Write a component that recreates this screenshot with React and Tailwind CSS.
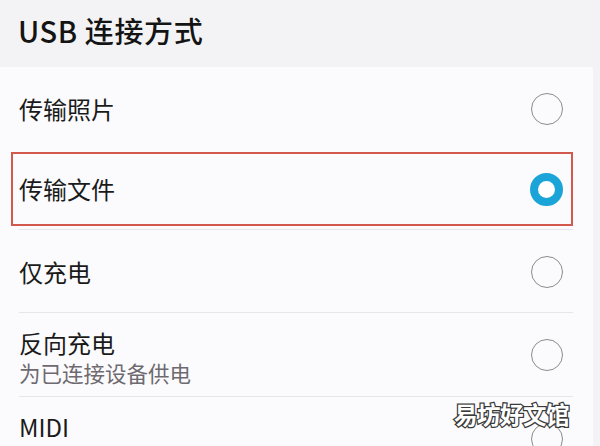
import React from "react";

const font = { fontFamily: '"Noto Sans CJK SC", "Noto Sans", sans-serif' };

function Radio({ checked }) {
  if (checked) {
    return (
      <div className="w-[33px] h-[33px] rounded-full border-[8px] border-[#1aa4d8] bg-white shrink-0" />
    );
  }
  return <div className="w-[32px] h-[32px] rounded-full border-[1.3px] border-[#8c8c8c] shrink-0" />;
}

function Divider() {
  return <div className="ml-[8px] h-px bg-[#e6e6ea] shrink-0" />;
}

export default function App() {
  return (
    <div
      className="relative w-[600px] h-[446px] overflow-hidden flex bg-[#fbfbfd] text-[#1a1a1a]"
      style={font}
    >
      <div className="flex-1 flex flex-col">
        <div className="shrink-0 h-[67px] bg-[#f3f3f5] flex items-center pl-[18px] pb-[6px]">
          <span className="text-[29px] leading-none font-medium tracking-[0.6px] text-[#141414]">USB 连接方式</span>
        </div>
        <div className="shrink-0 flex flex-col pl-[11px] pr-[20px]">
          <div className="h-[83px] flex items-center justify-between pl-[8px] pr-[10px] pt-[1px]">
            <span className="text-[24px] leading-none">传输照片</span>
            <Radio />
          </div>
          <div className="mt-[2px] h-[74px] border-[2px] border-[#d3594f] flex items-center justify-between pl-[6px] pr-[8.5px]">
            <span className="text-[24px] leading-none">传输文件</span>
            <Radio checked />
          </div>
          <div className="h-[3px]" />
          <Divider />
          <div className="h-[82px] flex items-center justify-between pl-[8px] pr-[10px] pt-[2px]">
            <span className="text-[24px] leading-none">仅充电</span>
            <Radio />
          </div>
          <Divider />
          <div className="h-[83px] flex items-center justify-between pl-[8px] pr-[10px]">
            <div className="flex flex-col pt-[6px]">
              <span className="text-[24px] leading-[30px]">反向充电</span>
              <span className="text-[21.5px] leading-[30px] text-[#6e6a70]">为已连接设备供电</span>
            </div>
            <Radio />
          </div>
          <Divider />
          <div className="h-[84px] flex items-center justify-between pl-[8px] pr-[10px]">
            <div className="flex flex-col pt-[6px]">
              <span className="text-[24px] leading-[30px]">MIDI</span>
              <span className="text-[21.5px] leading-[30px] text-[#6e6a70]">将设备用作 MIDI 输入设备</span>
            </div>
            <Radio />
          </div>
        </div>
      </div>
      <div className="w-[7px] bg-[#f3f3f5]" />
      <div
        className="absolute left-[454px] top-[398px] text-[23.5px] leading-[32px] font-bold text-white [paint-order:stroke_fill] [-webkit-text-stroke:2.5px_#3a3a3a] tracking-[-0.5px]"
      >
        易坊好文馆
      </div>
    </div>
  );
}
